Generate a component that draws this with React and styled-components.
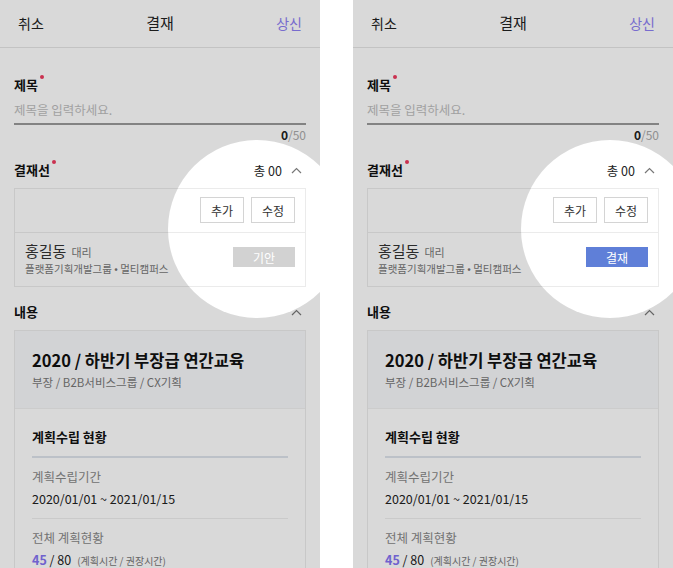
import React from 'react';
import styled, { createGlobalStyle } from 'styled-components';

const GlobalStyle = createGlobalStyle`
  html, body { margin: 0; padding: 0; background: #fff; }
  body { font-family: 'Noto Sans CJK KR', 'Noto Sans', sans-serif; color: #222; }
  * { box-sizing: border-box; }
`;

const Stage = styled.div`
  display: flex;
  gap: 33px;
  width: 673px;
  height: 568px;
  overflow: hidden;
`;

const Phone = styled.div`
  position: relative;
  width: 320px;
  height: 568px;
  overflow: hidden;
  background: #fff;
  flex-shrink: 0;
`;

const Spotlight = styled.div`
  position: absolute;
  left: 168px;
  top: 140px;
  width: 178px;
  height: 178px;
  border-radius: 50%;
  box-shadow: 0 0 0 900px rgba(0, 0, 0, 0.15);
  pointer-events: none;
  z-index: 5;
`;

const Header = styled.div`
  display: grid;
  grid-template-columns: 1fr auto 1fr;
  align-items: center;
  height: 48px;
  padding: 0 18px 2px;
  border-bottom: 1px solid #e6e6e6;
  font-size: 14px;
`;

const HeaderTitle = styled.div`
  font-size: 15px;
  font-weight: 400;
  color: #222;
`;

const HeaderAction = styled.div`
  justify-self: ${p => (p.$right ? 'end' : 'start')};
  color: ${p => (p.$accent ? '#8d7ff2' : '#222')};
`;

const Body = styled.div`
  padding: 0 14px;
`;

const Label = styled.div`
  position: relative;
  display: inline-block;
  font-size: 13px;
  font-weight: 700;
  line-height: 18px;
  color: #111;
`;

const Required = styled.span`
  position: absolute;
  top: -1px;
  right: -6px;
  width: 4px;
  height: 4px;
  border-radius: 50%;
  background: #ee3a5e;
`;

const TitleField = styled.div`
  margin-top: 23px;
`;

const Input = styled.div`
  height: 30px;
  padding-top: 6px;
  font-size: 12.5px;
  line-height: 18px;
  color: #bdbdbd;
  border-bottom: 2px solid #9a9a9a;
`;

const Counter = styled.div`
  text-align: right;
  font-size: 12px;
  line-height: 16px;
  margin-top: 2px;
  color: #aaa;
  b { color: #222; font-weight: 700; }
`;

const SectionHead = styled.div`
  display: flex;
  align-items: center;
  justify-content: space-between;
  height: 18px;
  margin-top: ${p => p.$top}px;
`;

const HeadRight = styled.div`
  display: flex;
  align-items: center;
  gap: 9px;
  font-size: 12.5px;
  color: #222;
  padding-right: 4px;
`;

const Chevron = () => (
  <svg width="11" height="7" viewBox="0 0 11 7">
    <polyline points="1,6 5.5,1.5 10,6" fill="none" stroke="#777" strokeWidth="1.2" />
  </svg>
);

const LineBox = styled.div`
  margin-top: 9px;
  border: 1px solid #ebebeb;
`;

const ToolRow = styled.div`
  display: flex;
  justify-content: flex-end;
  align-items: center;
  gap: 7px;
  height: 44px;
  padding: 0 10px 1px;
  border-bottom: 1px solid #ebebeb;
`;

const SmallButton = styled.div`
  width: 44px;
  height: 26px;
  border: 1px solid #d4d4d4;
  display: flex;
  align-items: center;
  justify-content: center;
  font-size: 12px;
  color: #333;
  background: #fff;
`;

const PersonRow = styled.div`
  display: flex;
  align-items: center;
  justify-content: space-between;
  height: 53px;
  padding: 0 10px 2px;
`;

const Person = styled.div`
  display: flex;
  flex-direction: column;
`;

const Name = styled.div`
  font-size: 15px;
  line-height: 20px;
  color: #333;
  font-weight: 400;
  span {
    font-size: 11px;
    color: #777;
    margin-left: 5px;
  }
`;

const Org = styled.div`
  font-size: 10.5px;
  line-height: 14px;
  color: #777;
`;

const ActionButton = styled.div`
  width: 62px;
  height: 20px;
  display: flex;
  align-items: center;
  justify-content: center;
  font-size: 12px;
  color: #fff;
  background: ${p => (p.$active ? '#5f7fd8' : '#d2d2d2')};
  margin-top: -3px;
`;

const Card = styled.div`
  margin-top: 9px;
  border: 1px solid #ebebeb;
  border-bottom: none;
`;

const CardTop = styled.div`
  height: 78px;
  padding: 17px 17px 0;
  background: #f7f8fb;
  border-bottom: 1px solid #f0f0f0;
`;

const CardTitle = styled.div`
  font-size: 16.5px;
  font-weight: 700;
  line-height: 24px;
  color: #111;
`;

const CardSub = styled.div`
  margin-top: 2px;
  font-size: 11.5px;
  line-height: 16px;
  color: #777;
`;

const CardBody = styled.div`
  padding: 19px 17px 0;
`;

const BlockTitle = styled.div`
  font-size: 13px;
  font-weight: 700;
  line-height: 18px;
  padding-bottom: 10px;
  border-bottom: 2px solid #dde3eb;
  color: #111;
`;

const Item = styled.div`
  padding: 10px 0 ${p => (p.$last ? 0 : 10)}px;
  border-bottom: ${p => (p.$last ? 'none' : '1px solid #eeeeee')};
`;

const ItemLabel = styled.div`
  font-size: 12.5px;
  line-height: 18px;
  color: #888;
`;

const ItemValue = styled.div`
  margin-top: 4px;
  font-size: 12.5px;
  line-height: 18px;
  color: #222;
  b { color: #8473f2; font-weight: 700; }
  small { font-size: 10px; color: #777; margin-left: 6px; }
`;

function Screen({ active }) {
  return (
    <Phone>
      <Header>
        <HeaderAction>취소</HeaderAction>
        <HeaderTitle>결재</HeaderTitle>
        <HeaderAction $right $accent>상신</HeaderAction>
      </Header>
      <Body>
        <TitleField>
          <Label>제목<Required /></Label>
          <Input>제목을 입력하세요.</Input>
          <Counter><b>0</b>/50</Counter>
        </TitleField>

        <SectionHead $top={18}>
          <Label>결재선<Required /></Label>
          <HeadRight>총 00 <Chevron /></HeadRight>
        </SectionHead>
        <LineBox>
          <ToolRow>
            <SmallButton>추가</SmallButton>
            <SmallButton>수정</SmallButton>
          </ToolRow>
          <PersonRow>
            <Person>
              <Name>홍길동<span>대리</span></Name>
              <Org>플랫폼기획개발그룹 • 멀티캠퍼스</Org>
            </Person>
            <ActionButton $active={active}>{active ? '결재' : '기안'}</ActionButton>
          </PersonRow>
        </LineBox>

        <SectionHead $top={16}>
          <Label>내용</Label>
          <HeadRight><Chevron /></HeadRight>
        </SectionHead>
        <Card>
          <CardTop>
            <CardTitle>2020 / 하반기 부장급 연간교육</CardTitle>
            <CardSub>부장 / B2B서비스그룹 / CX기획</CardSub>
          </CardTop>
          <CardBody>
            <BlockTitle>계획수립 현황</BlockTitle>
            <Item>
              <ItemLabel>계획수립기간</ItemLabel>
              <ItemValue>2020/01/01 ~ 2021/01/15</ItemValue>
            </Item>
            <Item $last>
              <ItemLabel>전체 계획현황</ItemLabel>
              <ItemValue><b>45</b> / 80<small>(계획시간 / 권장시간)</small></ItemValue>
            </Item>
          </CardBody>
        </Card>
      </Body>
      <Spotlight />
    </Phone>
  );
}

export default function App() {
  return (
    <>
      <GlobalStyle />
      <Stage>
        <Screen />
        <Screen active />
      </Stage>
    </>
  );
}
